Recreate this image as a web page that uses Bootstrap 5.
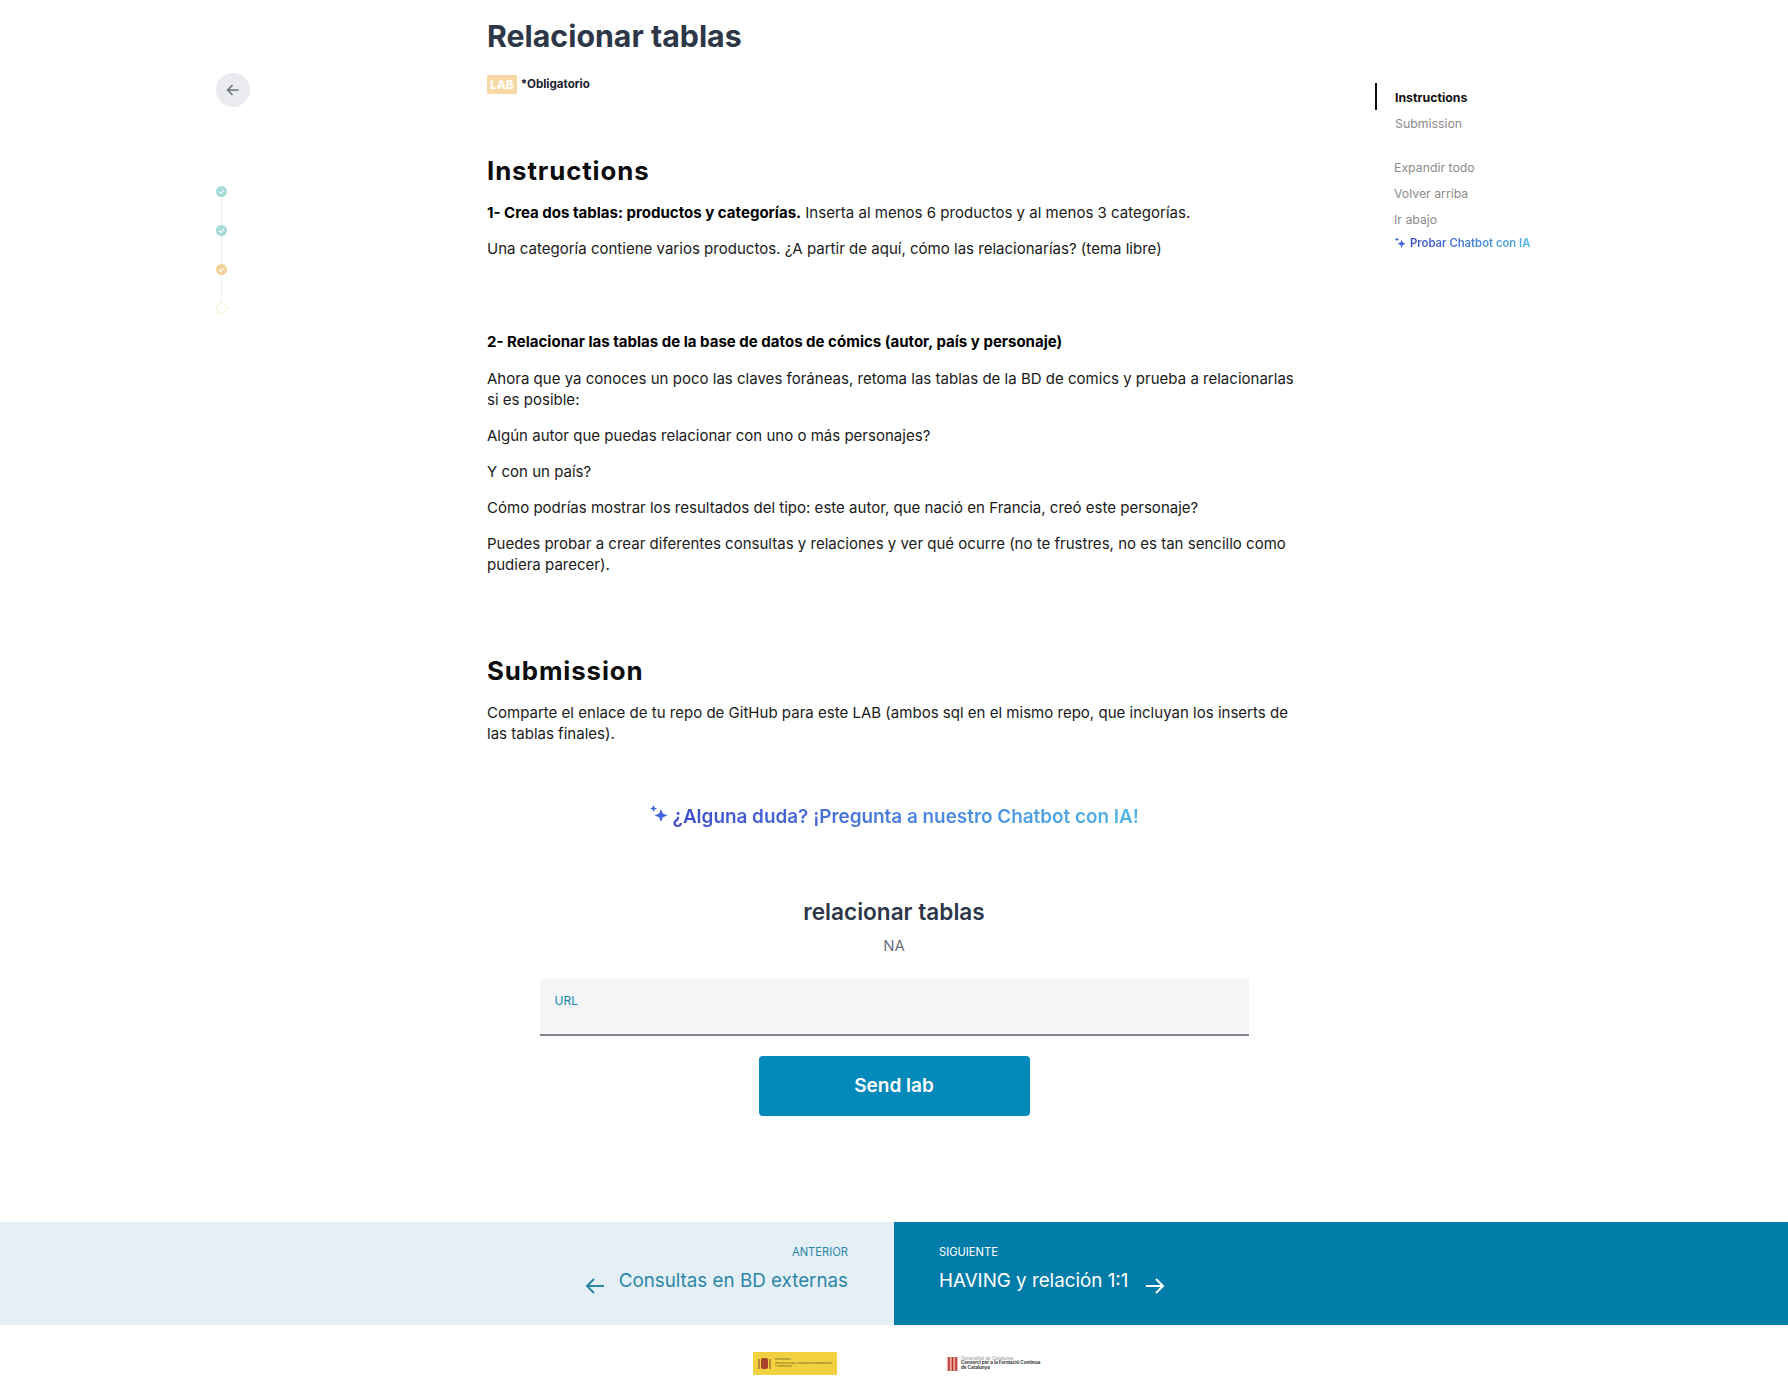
<!DOCTYPE html>
<html lang="es">
<head>
    <meta charset="UTF-8">
    <meta name="viewport" content="width=device-width, initial-scale=1">
    <link rel="stylesheet" href="https://cdn.jsdelivr.net/npm/bootstrap@5.3.0/dist/css/bootstrap.min.css">
    <script src="https://cdn.jsdelivr.net/npm/bootstrap@5.3.0/dist/js/bootstrap.bundle.min.js"></script>
    <title>Relacionar tablas</title>
    <style>
        body { font-family: Inter, "Liberation Sans", sans-serif; color: #1a1a1a; background: #fff; }

        .lesson-wrap { height: 1222px; }
        .rail { width: 487px; padding-left: 216px; padding-top: 73px; }
        .back-btn { width: 34px; height: 34px; border-radius: 50%; background: #e9ebef; color: #6b7280; border: 0; padding: 0; }
        .steps { margin-top: 79px; }
        .step-dot { width: 11px; height: 11px; border-radius: 50%; display: flex; align-items: center; justify-content: center; }
        .step-line { width: 1px; height: 28px; background: #edf0f2; margin-left: 5px; }
        .dot-done { background: #a5dad8; }
        .dot-warn { background: #f5d29b; }
        .dot-empty { border: 1px solid #f6eecb; background: #fff; }

        .lesson-main { width: 814px; }
        .lesson-title { font-size: 30.3px; font-weight: 700; color: #2d3748; line-height: 36px; margin: 18px 0 21px; }
        .lab-tag { background: #f6d9a5; color: #fff; font-size: 12px; font-weight: 700; line-height: 19px; padding: 0 3px; border-radius: 1px; }
        .req-text { font-size: 11.6px; font-weight: 700; color: #1a202c; margin-left: 4px; padding-top: 1px; }
        .sec-title { font-size: 25.8px; font-weight: 700; letter-spacing: .9px; color: #0c0c0c; line-height: 34px; margin: 0 0 14px; }
        .lesson-main p { font-size: 15.04px; line-height: 21px; margin: 0 0 15px; }
        .lesson-main p b { font-weight: 700; color: #000; }

        .ask-line { text-align: center; margin-top: 59px; line-height: 28px; }
        .ask-line svg { vertical-align: -2px; }
        .grad-text { font-size: 18.9px; font-weight: 600; background: linear-gradient(90deg, #3f4cc9 0%, #4a86e0 55%, #4fb7e4 100%); -webkit-background-clip: text; background-clip: text; color: transparent; }
        .lab-name { font-size: 22.6px; font-weight: 600; color: #2d3748; text-align: center; line-height: 30px; margin-top: 66px; }
        .lab-desc { font-size: 15px; color: #6b7280; text-align: center; line-height: 20px; margin-top: 9px; }
        .url-box { width: 709px; height: 57px; margin: 23px auto 0; background: #f3f5f7; border-bottom: 2px solid #7f8591; padding: 14px 15px; }
        .url-box label { font-size: 12px; color: #1787ae; display: block; line-height: 16px; }
        .send-btn { display: block; width: 271px; height: 60px; margin: 20px auto 0; background: #0489bb; color: #fff; border: 0; border-radius: 4px; font-size: 19px; font-weight: 600; }
        .send-btn:hover { background: #0489bb; color: #fff; }

        .toc { margin-left: 94px; padding-top: 89px; }
        .toc-item { font-size: 12.3px; line-height: 18px; color: #8b8b8b; }
        .toc-current { font-weight: 700; color: #111; position: relative; }
        .toc-current::before { content: ""; position: absolute; left: -20px; top: -6px; width: 2px; height: 27px; background: #111; }
        .toc-link { font-size: 12.3px; line-height: 18px; color: #8b8b8b; margin-left: -1px; }
        .grad-small { font-size: 11.3px; font-weight: 600; background: linear-gradient(90deg, #3f4cc9, #4fb7e4); -webkit-background-clip: text; background-clip: text; color: transparent; }

        .pager-prev { width: 894px; height: 103px; background: #e5f0f6; color: #2b86a8; padding: 22px 46px 0 0; }
        .pager-next { width: 894px; height: 103px; background: #007ca8; color: #fff; padding: 22px 0 0 45px; }
        .pager-label { font-size: 11.2px; line-height: 16px; }
        .pager-title { font-size: 18.8px; line-height: 28px; margin-top: 7px; }
        .pager-title svg { margin-top: 9px; }
        .pager-prev .pager-title { gap: 14px; }
        .pager-next .pager-title { gap: 17px; }

        .logo-row { height: 76px; padding-top: 27px; padding-left: 753px; }
        .logo-es { width: 84px; height: 23px; background: #f1d13f; display: flex; align-items: center; gap: 3px; padding: 0 4px; overflow: hidden; }
        .logo-es span { font-size: 2.7px; line-height: 3.4px; color: #5a4c1c; white-space: nowrap; }
        .logo-cat { margin-left: 110px; display: flex; align-items: center; gap: 3px; height: 23px; }
        .logo-cat span { font-size: 4.5px; line-height: 4.6px; font-weight: 700; color: #333; white-space: nowrap; }
    </style>
</head>
<body>

<div class="d-flex lesson-wrap">
    <!-- rail lateral -->
    <aside class="rail flex-shrink-0">
        <button type="button" class="back-btn d-flex align-items-center justify-content-center" aria-label="Volver">
            <svg width="14" height="14" viewBox="0 0 14 14" fill="none" stroke="currentColor" stroke-width="1.5"><path d="M12.5 7H1.8M6.500 2 1.600 7l4.900 5"/></svg>
        </button>
        <div class="steps">
            <div class="step-dot dot-done"><svg width="7" height="7" viewBox="0 0 8 8" fill="none" stroke="#fff" stroke-width="1.2"><path d="M1 4.200 3.200 6.200 7 2"/></svg></div>
            <div class="step-line"></div>
            <div class="step-dot dot-done"><svg width="7" height="7" viewBox="0 0 8 8" fill="none" stroke="#fff" stroke-width="1.2"><path d="M1 4.200 3.200 6.200 7 2"/></svg></div>
            <div class="step-line"></div>
            <div class="step-dot dot-warn"><svg width="7" height="7" viewBox="0 0 8 8" fill="none" stroke="#fff" stroke-width="1.2"><path d="M1 4.200 3.200 6.200 7 2"/></svg></div>
            <div class="step-line"></div>
            <div class="step-dot dot-empty"></div>
        </div>
    </aside>

    <main class="lesson-main flex-shrink-0">
        <h1 class="lesson-title">Relacionar tablas</h1>
        <div class="d-flex align-items-center" style="height:19px">
            <span class="lab-tag">LAB</span><span class="req-text">*Obligatorio</span>
        </div>

        <h2 class="sec-title" style="margin-top:60px">Instructions</h2>
        <p><b>1- Crea dos tablas: productos y categorías.</b> Inserta al menos 6 productos y al menos 3 categorías.</p>
        <p style="margin-bottom:72px">Una categoría contiene varios productos. ¿A partir de aquí, cómo las relacionarías? (tema libre)</p>
        <p style="margin-bottom:16px"><b>2- Relacionar las tablas de la base de datos de cómics (autor, país y personaje)</b></p>
        <p>Ahora que ya conoces un poco las claves foráneas, retoma las tablas de la BD de comics y prueba a relacionarlas si es posible:</p>
        <p>Algún autor que puedas relacionar con uno o más personajes?</p>
        <p>Y con un país?</p>
        <p>Cómo podrías mostrar los resultados del tipo: este autor, que nació en Francia, creó este personaje?</p>
        <p style="margin-bottom:79px">Puedes probar a crear diferentes consultas y relaciones y ver qué ocurre (no te frustres, no es tan sencillo como pudiera parecer).</p>

        <h2 class="sec-title">Submission</h2>
        <p>Comparte el enlace de tu repo de GitHub para este LAB (ambos sql en el mismo repo, que incluyan los inserts de las tablas finales).</p>

        <div class="ask-line">
            <svg width="19" height="20" viewBox="0 0 19 20" fill="#3d63dd"><path d="M12 4l1.800 4.600 4.700 1.800-4.700 1.800L12 17l-1.800-4.800-4.700-1.800 4.700-1.800z"/><path d="M4.500 0l1 2.500 2.500 1-2.500 1-1 2.500-1-2.500-2.500-1 2.500-1z"/></svg>
            <span class="grad-text">¿Alguna duda? ¡Pregunta a nuestro Chatbot con IA!</span>
        </div>

        <div class="lab-name">relacionar tablas</div>
        <div class="lab-desc">NA</div>
        <div class="url-box"><label>URL</label></div>
        <button type="button" class="btn send-btn">Send lab</button>
    </main>

    <aside class="toc">
        <div class="toc-item toc-current">Instructions</div>
        <div class="toc-item" style="margin-top:8px">Submission</div>
        <div class="toc-link" style="margin-top:26px">Expandir todo</div>
        <div class="toc-link" style="margin-top:8px">Volver arriba</div>
        <div class="toc-link" style="margin-top:8px">Ir abajo</div>
        <div class="d-flex align-items-center gap-1" style="margin:6px 0 0 -1px">
            <svg width="12" height="13" viewBox="0 0 19 20" fill="#3d63dd"><path d="M12 4l1.800 4.600 4.700 1.800-4.700 1.800L12 17l-1.800-4.800-4.700-1.800 4.700-1.800z"/><path d="M4.500 0l1 2.500 2.500 1-2.500 1-1 2.500-1-2.500-2.500-1 2.500-1z"/></svg>
            <span class="grad-small">Probar Chatbot con IA</span>
        </div>
    </aside>
</div>

<!-- anterior / siguiente -->
<div class="d-flex">
    <div class="pager-prev text-end">
        <div class="pager-label">ANTERIOR</div>
        <div class="pager-title d-flex justify-content-end align-items-center">
            <svg width="20" height="18" viewBox="0 0 20 18" fill="none" stroke="currentColor" stroke-width="2"><path d="M19 9H2M9 2 2 9l7 7"/></svg>
            <span>Consultas en BD externas</span>
        </div>
    </div>
    <div class="pager-next">
        <div class="pager-label">SIGUIENTE</div>
        <div class="pager-title d-flex align-items-center">
            <span>HAVING y relación 1:1</span>
            <svg width="20" height="18" viewBox="0 0 20 18" fill="none" stroke="currentColor" stroke-width="2"><path d="M1 9h17M11 2l7 7-7 7"/></svg>
        </div>
    </div>
</div>

<div class="logo-row d-flex">
    <div class="logo-es">
        <svg class="flex-shrink-0" width="15" height="15" viewBox="0 0 15 15"><rect x="4" y="2" width="7" height="11" rx="2" fill="#a8412c"/><rect x="1" y="3" width="2" height="10" fill="#b98a3a"/><rect x="12" y="3" width="2" height="10" fill="#b98a3a"/></svg>
        <span>MINISTERIO<br>DE EDUCACIÓN, FORMACIÓN PROFESIONAL<br>Y DEPORTES</span>
    </div>
    <div class="logo-cat">
        <svg class="flex-shrink-0" width="11" height="14" viewBox="0 0 11 14"><rect width="11" height="14" fill="#e8b0aa"/><path d="M2 0v14M5.500 0v14M9 0v14" stroke="#c3312b" stroke-width="1.600"/></svg>
        <span><span style="font-weight:400;color:#888">Generalitat de Catalunya</span><br>Consorci per a la Formació Contínua<br>de Catalunya</span>
    </div>
</div>

</body>
</html>
